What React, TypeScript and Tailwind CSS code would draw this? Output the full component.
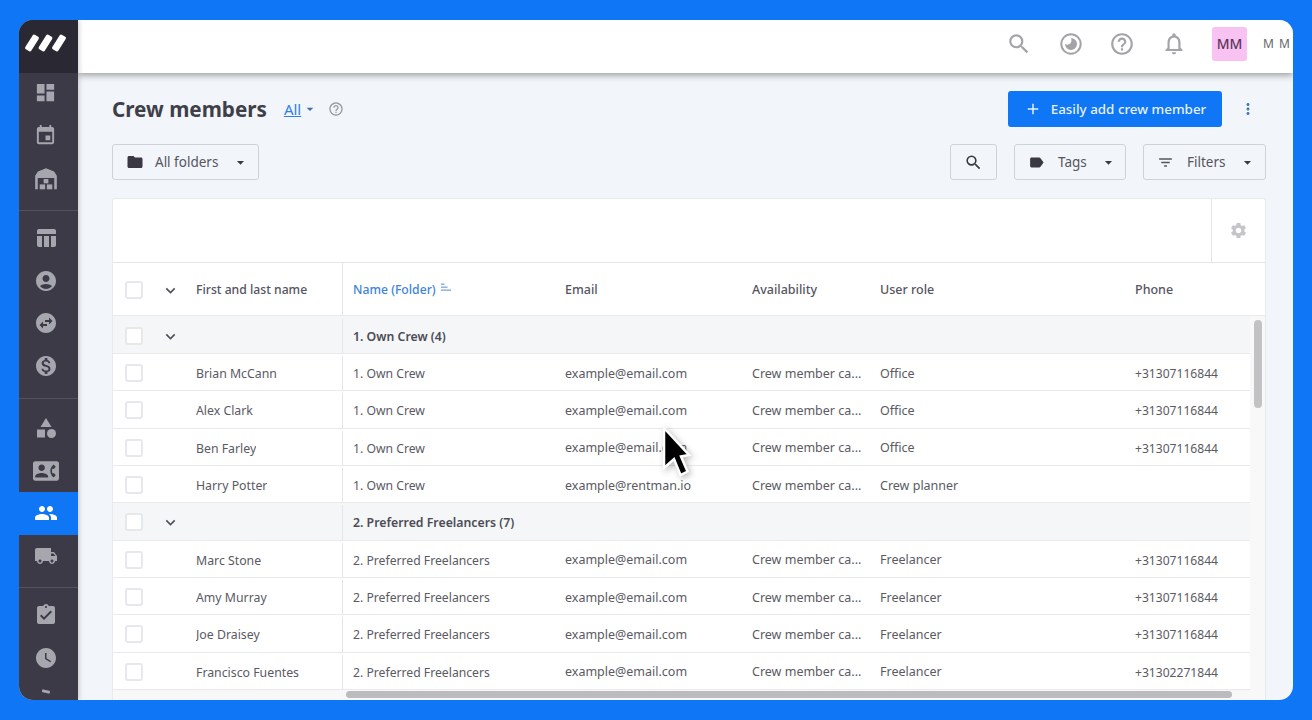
import React from "react";
import {
  MdDashboard, MdEvent, MdTableChart, MdAccountCircle, MdSwapHorizontalCircle, MdMonetizationOn, MdCategory,
  MdContactPhone, MdPeople, MdLocalShipping, MdAssignmentTurnedIn, MdWatchLater, MdSearch, MdHelpOutline,
  MdNotificationsNone, MdFolder, MdLabel, MdFilterList, MdSettings, MdMoreVert, MdArrowDropDown, MdExpandMore, MdAdd,
} from "react-icons/md";

const Warehouse = ({ size = 26 }: { size?: number }) => (
  <svg width={size} height={size} viewBox="0 0 24 24" fill="currentColor">
    <path d="M12 2 4.500 5 2 9v12.500h2.400V11h15.200v10.500H22V9l-2.500-4z" />
    <rect x="9.800" y="12" width="4.400" height="4" />
    <rect x="6.200" y="17" width="5" height="4.500" />
    <rect x="12.800" y="17" width="5" height="4.500" />
  </svg>
);

const Logo = () => (
  <svg width="42" height="20" viewBox="0 0 42 20" fill="#fff">
    <rect x="-3.500" y="-8.500" width="7" height="17" rx="1.500" transform="translate(8 10) rotate(32)" />
    <rect x="-3.500" y="-8.500" width="7" height="17" rx="1.500" transform="translate(21.500 10) rotate(32)" />
    <rect x="-3.500" y="-8.500" width="7" height="17" rx="1.500" transform="translate(35 10) rotate(32)" />
  </svg>
);

const Progress = () => (
  <svg width="24" height="24" viewBox="0 0 24 24">
    <circle cx="12" cy="12" r="9.700" fill="none" stroke="#a3a3a8" strokeWidth="2" />
    <path d="M12 6a6 6 0 1 1-6 6c2 1 4 .8 5.300-.5C12.600 10 12.800 8 12 6z" fill="#a3a3a8" />
  </svg>
);

const SortIcon = () => (
  <svg width="12" height="10" viewBox="0 0 12 10" fill="#7aa7dc">
    <rect x="1" y="0.500" width="3.500" height="1.300" />
    <rect x="1" y="3.500" width="6.500" height="1.300" />
    <rect x="1" y="6.500" width="10" height="1.300" />
  </svg>
);

const Cursor = () => (
  <svg width="44" height="60" viewBox="0 0 44 60" className="absolute left-[656px] top-[422px] z-30" style={{ filter: "drop-shadow(2px 2px 3px rgba(0,0,0,.28))" }}>
    <path d="M8 6 33 33l-8 1.500 6.500 15-7 3.500-6.500-16-10 9z" fill="#000" stroke="#fff" strokeWidth="2.500" strokeLinejoin="miter" />
  </svg>
);

const SideItem = ({ icon, active }: { icon: React.ReactNode; active?: boolean }) => (
  <div className={active ? "flex h-[42.500px] items-center justify-center bg-[#0f76f5] pr-[6px] text-white" : "flex h-[42.500px] items-center justify-center pr-[6px] text-[#a6a6af]"}>
    {icon}
  </div>
);

const Check = () => <div className="h-[18px] w-[18px] shrink-0 rounded-[3px] border-2 border-[#e6e8eb] bg-white" />;

const Frozen = ({ name, head }: { name?: string; head?: boolean }) => (
  <div className="flex w-[230px] shrink-0 items-center border-r border-[#e3e5e9] pl-3">
    <Check />
    <div className="flex w-[53px] justify-end pr-[16px]">
      {head ? <MdExpandMore size={19} color="#4d4d57" /> : null}
    </div>
    <span className="truncate pt-[2px] text-[12.300px]">{name}</span>
  </div>
);

const rows: (
  | { g: string; tall?: boolean }
  | { n: string; f: string; e: string; r: string; p: string }
)[] = [
  { g: "1. Own Crew (4)", tall: true },
  { n: "Brian McCann", f: "1. Own Crew", e: "example@email.com", r: "Office", p: "+31307116844" },
  { n: "Alex Clark", f: "1. Own Crew", e: "example@email.com", r: "Office", p: "+31307116844" },
  { n: "Ben Farley", f: "1. Own Crew", e: "example@email.com", r: "Office", p: "+31307116844" },
  { n: "Harry Potter", f: "1. Own Crew", e: "example@rentman.io", r: "Crew planner", p: "" },
  { g: "2. Preferred Freelancers (7)" },
  { n: "Marc Stone", f: "2. Preferred Freelancers", e: "example@email.com", r: "Freelancer", p: "+31307116844" },
  { n: "Amy Murray", f: "2. Preferred Freelancers", e: "example@email.com", r: "Freelancer", p: "+31307116844" },
  { n: "Joe Draisey", f: "2. Preferred Freelancers", e: "example@email.com", r: "Freelancer", p: "+31307116844" },
  { n: "Francisco Fuentes", f: "2. Preferred Freelancers", e: "example@email.com", r: "Freelancer", p: "+31302271844" },
];

const OutlineBtn = ({ children, cls }: { children: React.ReactNode; cls: string }) => (
  <div className={"flex h-9 items-center rounded-[3px] border border-[#cfd3d9] text-[13.500px] text-[#55555f] " + cls}>{children}</div>
);

export default function App() {
  return (
    <div className="relative h-screen w-full overflow-hidden bg-[#0f76f5] pb-5 pl-[19px] pr-[19px] pt-5" style={{ fontFamily: '"Noto Sans", "Open Sans", sans-serif' }}>
      <div className="flex h-full overflow-hidden rounded-[14px] bg-[#f2f5f9]">
        <aside className="z-20 flex w-[59px] shrink-0 flex-col overflow-hidden bg-[#3d3a47] shadow-[1px_0_5px_rgba(0,0,0,0.2)]">
          <div className="flex h-[53px] shrink-0 items-center justify-center bg-[#2a2833] pb-[7px] pr-[8px]"><Logo /></div>
          <div className="h-[138px] shrink-0 border-b border-[#55525f]">
            <div className="-mt-[2px]">
              <SideItem icon={<MdDashboard size={23} />} />
              <div className="mt-px"><SideItem icon={<MdEvent size={23} />} /></div>
              <div className="mt-px"><SideItem icon={<Warehouse />} /></div>
            </div>
          </div>
          <div className="h-[188px] shrink-0 border-b border-[#55525f] pt-[6px]">
            <SideItem icon={<MdTableChart size={24} />} />
            <SideItem icon={<MdAccountCircle size={24} />} />
            <SideItem icon={<MdSwapHorizontalCircle size={24} />} />
            <SideItem icon={<MdMonetizationOn size={24} />} />
          </div>
          <div className="h-[189px] shrink-0 border-b border-[#55525f] pt-2">
            <SideItem icon={<MdCategory size={24} />} />
            <SideItem icon={<MdContactPhone size={26} />} />
            <SideItem active icon={<MdPeople size={24} />} />
            <SideItem icon={<MdLocalShipping size={24} />} />
          </div>
          <div className="pt-[6px]">
            <SideItem icon={<MdAssignmentTurnedIn size={24} />} />
            <SideItem icon={<MdWatchLater size={24} />} />
            <div className="flex justify-center pr-[6px] pt-[11px]">
              <div className="h-[3px] w-2 rotate-12 rounded-[1px] bg-[#a6a6af]" />
            </div>
          </div>
        </aside>

        <div className="flex min-w-0 flex-1 flex-col">
          <header className="z-10 flex h-[53px] shrink-0 items-center justify-end bg-white pb-[6px] shadow-[0_2px_7px_rgba(0,0,0,0.38)]">
            <div className="flex w-[26px] justify-center text-[#a3a3a8]"><MdSearch size={26} /></div>
            <div className="ml-[26px] flex w-[26px] justify-center"><Progress /></div>
            <div className="ml-[25px] flex w-[26px] justify-center text-[#a3a3a8]"><MdHelpOutline size={26} /></div>
            <div className="ml-[26px] flex w-[26px] justify-center text-[#a3a3a8]"><MdNotificationsNone size={27} /></div>
            <div className="ml-[25px] flex h-[34px] w-[35px] items-center justify-center rounded-[3px] bg-[#f8c3f2] text-[14px] font-medium text-[#5c3560]">MM</div>
            <div className="ml-4 w-[30px] overflow-hidden whitespace-nowrap text-[12px] tracking-[1px] text-[#66666f]">M M</div>
          </header>

          <main className="flex min-h-0 flex-1 flex-col pl-[34px] pr-[27px] pt-[18px]">
            <div className="flex h-9 shrink-0 items-center">
              <h1 className="text-[20.700px] font-bold leading-none text-[#3f3f4a]">Crew members</h1>
              <span className="ml-[17px] text-[15px] text-[#2f80e4] underline">All</span>
              <MdArrowDropDown size={16} color="#3f6fae" className="ml-px" />
              <MdHelpOutline size={16} color="#9a9aa2" className="ml-[10px]" />
              <div className="ml-auto flex h-9 w-[214px] items-center justify-center gap-[9px] rounded-[3px] bg-[#0f76f5] text-[13.400px] font-medium text-[#e6f0fe]">
                <MdAdd size={18} /> Easily add crew member
              </div>
              <div className="ml-[17px] mr-[9px] text-[#3f78bd]"><MdMoreVert size={18} /></div>
            </div>

            <div className="mt-[17px] flex h-9 shrink-0 items-center">
              <OutlineBtn cls="w-[147px] pl-[13px]">
                <MdFolder size={18} color="#3a3843" />
                <span className="ml-[11px]">All folders</span>
                <MdArrowDropDown size={17} color="#3a3843" className="ml-[14px]" />
              </OutlineBtn>
              <OutlineBtn cls="ml-auto w-[47px] justify-center"><MdSearch size={19} color="#3a3843" /></OutlineBtn>
              <OutlineBtn cls="ml-[17px] w-[112px] pl-[13px]">
                <MdLabel size={17} color="#3a3843" />
                <span className="ml-[13px]">Tags</span>
                <MdArrowDropDown size={17} color="#3a3843" className="ml-[13px]" />
              </OutlineBtn>
              <OutlineBtn cls="ml-[17px] w-[123px] pl-[13px]">
                <MdFilterList size={17} color="#55555f" />
                <span className="ml-[13px]">Filters</span>
                <MdArrowDropDown size={17} color="#3a3843" className="ml-[13px]" />
              </OutlineBtn>
            </div>

            <section className="relative mt-[18px] flex min-h-0 flex-1 flex-col overflow-hidden rounded-t-[3px] border border-b-0 border-[#e8eaed] bg-white text-[12.500px] text-[#5a5a63]">
              <div className="flex h-[64px] shrink-0 justify-end border-b border-[#e3e5e9]">
                <div className="flex w-[54px] items-center justify-center border-l border-[#e3e5e9] text-[#c4c5c9]"><MdSettings size={19} /></div>
              </div>

              <div className="flex h-[53px] shrink-0 items-center border-b border-[#e8eaed] font-medium text-[#55555f]">
                <div className="flex h-full w-[230px] shrink-0 items-center border-r border-[#e3e5e9] pl-3 pt-[2px]">
                  <Check />
                  <div className="flex w-[53px] justify-end pr-[16px]"><MdExpandMore size={19} color="#4d4d57" /></div>
                  <span className="text-[12.200px]">First and last name</span>
                </div>
                <div className="flex w-[212px] shrink-0 items-center pl-[10px] pt-[2px] text-[12.200px] text-[#3d84dc]">Name (Folder)<span className="mb-[3px] ml-1"><SortIcon /></span></div>
                <div className="w-[187px] shrink-0 pl-[10px] pt-[2px]">Email</div>
                <div className="w-[128px] shrink-0 pl-[10px] pt-[2px]">Availability</div>
                <div className="w-[255px] shrink-0 pl-[10px] pt-[2px]">User role</div>
                <div className="w-[125px] shrink-0 pl-[10px] pt-[2px]">Phone</div>
              </div>

              <div className="min-h-0 flex-1 overflow-hidden bg-[#f8f8f9]">
                {rows.map((r, i) =>
                  "g" in r ? (
                    <div key={i} className={r.tall ? "flex h-[38px] w-[1137px] items-stretch border-b border-[#e8eaed] bg-[#f5f6f8] pt-[3px]" : "flex h-[37.330px] w-[1137px] items-stretch border-b border-[#e8eaed] bg-[#f5f6f8] pt-[2px]"}>
                      <Frozen head />
                      <div className="flex items-center pl-[10px] pt-[2px] text-[12.300px] font-semibold text-[#4c4c56]">{r.g}</div>
                    </div>
                  ) : (
                    <div key={i} className="flex h-[37.330px] w-[1137px] items-stretch border-b border-[#e8eaed] bg-white pt-[2px]">
                      <Frozen name={r.n} />
                      <div className="flex w-[212px] shrink-0 items-center truncate pl-[10px] pt-[2px] text-[12.200px]">{r.f}</div>
                      <div className="flex w-[187px] shrink-0 items-center pl-[10px] pt-[2px]">{r.e}</div>
                      <div className="flex w-[128px] shrink-0 items-center whitespace-nowrap pl-[10px] pt-[2px]">Crew member ca...</div>
                      <div className="flex w-[255px] shrink-0 items-center pl-[10px] pt-[2px]">{r.r}</div>
                      <div className="flex w-[125px] shrink-0 items-center pl-[10px] pt-[2px] text-[12.100px]">{r.p}</div>
                    </div>
                  )
                )}
              </div>

              <div className="absolute right-[3px] top-[121px] h-[88px] w-2 rounded-[4px] bg-[#c2c2c4]" />
              <div className="absolute bottom-[2px] left-[233px] h-[7px] w-[886px] rounded-[4px] bg-[#bcbcbe]" />
            </section>
          </main>
        </div>
      </div>
      <Cursor />
    </div>
  );
}
